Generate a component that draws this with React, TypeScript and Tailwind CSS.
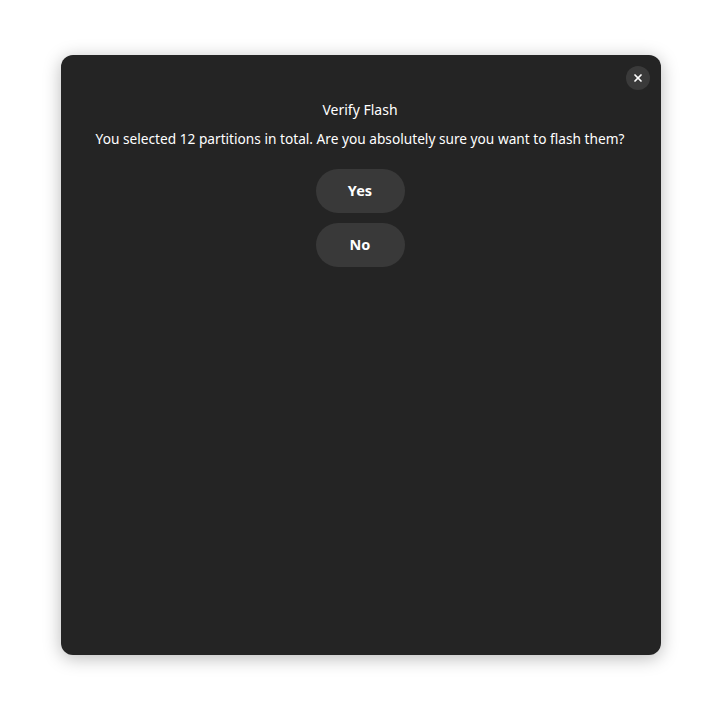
import { X } from 'lucide-react'

export default function App() {
  return (
    <div className="w-[722px] h-[722px] bg-white pt-[55px] pl-[61px]" style={{ fontFamily: '"Noto Sans", sans-serif' }}>
      <div className="relative w-[600px] h-[600px] rounded-[12px] bg-[#242424] shadow-[0_3px_18px_rgba(0,0,0,0.28)] flex flex-col items-center pt-[46px] pr-[2px]">
        {/* Close */}
        <button className="absolute top-[11px] right-[11px] w-6 h-6 rounded-full bg-[#3a3a3a] flex items-center justify-center text-white">
          <X size={12} strokeWidth={3.5} />
        </button>

        <h2 className="text-[14px] leading-[18px] text-white">Verify Flash</h2>
        <p className="mt-[11px] text-[13.7px] leading-[18px] text-white">
          You selected 12 partitions in total. Are you absolutely sure you want to flash them?
        </p>

        <div className="mt-[21px] flex flex-col gap-[10px]">
          <button className="w-[89px] h-[44px] rounded-full bg-[#393939] text-white text-[14.5px] font-bold">
            Yes
          </button>
          <button className="w-[89px] h-[44px] rounded-full bg-[#393939] text-white text-[14.5px] font-bold">
            No
          </button>
        </div>
      </div>
    </div>
  )
}
